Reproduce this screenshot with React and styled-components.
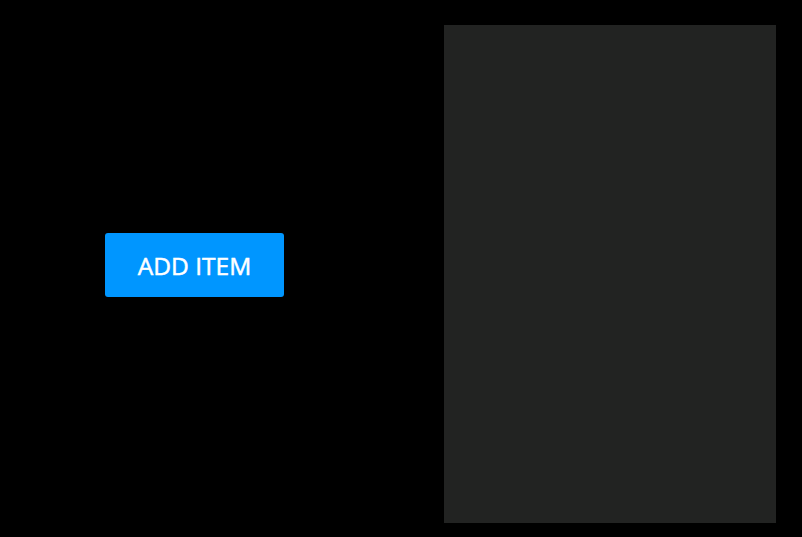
import React from "react";
import styled, { createGlobalStyle } from "styled-components";

const Global = createGlobalStyle`
  html, body { margin: 0; padding: 0; background: #000; }
  body { font-family: "Open Sans", "Liberation Sans", sans-serif; }
`;

const Page = styled.div`
  width: 802px;
  height: 537px;
  box-sizing: border-box;
  background: #000;
  display: flex;
  align-items: flex-start;
  padding: 25px 26px 14px 105px;
  gap: 160px;
`;

const Left = styled.div`
  padding-top: 208px;
`;

const Button = styled.button`
  width: 179px;
  height: 64px;
  border: none;
  border-radius: 3px;
  background: #0096ff;
  color: #fff;
  font-family: "Open Sans", "Liberation Sans", sans-serif;
  font-size: 24.5px;
  font-weight: 400;
  -webkit-text-stroke: 0.5px #fff;
  cursor: pointer;
  display: flex;
  align-items: center;
  justify-content: center;
  padding: 0;
`;

const Panel = styled.div`
  width: 332px;
  height: 498px;
  background: #222322;
`;

export default function App() {
  return (
    <>
      <Global />
      <Page>
        <Left>
          <Button>ADD ITEM</Button>
        </Left>
        <Panel />
      </Page>
    </>
  );
}
